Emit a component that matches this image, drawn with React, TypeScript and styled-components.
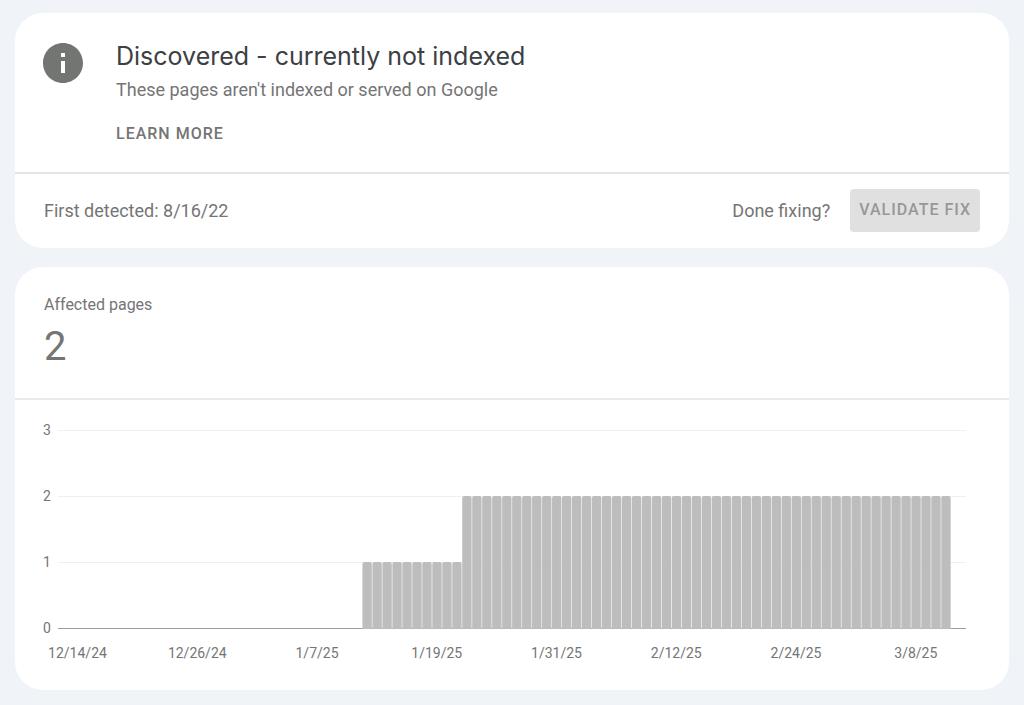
import React from "react";
import styled, { createGlobalStyle } from "styled-components";

const GlobalStyle = createGlobalStyle`
  * { box-sizing: border-box; }
  body {
    margin: 0;
    background: #f0f4f9;
    color: #757575;
    font-family: Roboto, "Liberation Sans", sans-serif;
  }
`;

const Page = styled.main`
  display: flex;
  flex-direction: column;
  gap: 19px;
  padding: 13px 15px 15px;
`;

const Card = styled.section`
  overflow: hidden;
  border-radius: 28px;
  background: #fff;
`;

const IssueHeader = styled.header`
  display: flex;
  align-items: flex-start;
  gap: 33px;
  padding: 25px 28px 26px;
  border-bottom: 2px solid #e4e4e4;
`;

const InfoIcon = styled.svg`
  flex: none;
  width: 40px;
  height: 40px;
  margin-top: 5px;
  fill: #737573;
`;

const IssueText = styled.div`
  display: flex;
  flex-direction: column;
  align-items: flex-start;
`;

const Title = styled.h1`
  margin: 0;
  color: #3c4043;
  font: 400 25px/36px Inter, "Open Sans", sans-serif;
`;

const Description = styled.p`
  margin: 4px 0 20px;
  font-size: 18px;
  line-height: 24px;
`;

const LearnMore = styled.a`
  color: #757575;
  font-size: 16px;
  font-weight: 500;
  line-height: 24px;
  letter-spacing: 1px;
  text-decoration: none;
  text-transform: uppercase;
`;

const IssueFooter = styled.div`
  display: flex;
  align-items: center;
  justify-content: space-between;
  padding: 15px 29px 16px;
  font-size: 18px;
  line-height: 24px;
`;

const FixActions = styled.div`
  display: flex;
  align-items: center;
  gap: 20px;
`;

const ValidateButton = styled.button`
  height: 43px;
  padding: 0 9px 2px;
  border: 0;
  border-radius: 4px;
  background: #e0e0e0;
  color: #979797;
  font: 500 16px/24px Roboto, "Liberation Sans", sans-serif;
  letter-spacing: 1px;
  text-transform: uppercase;
`;

const Summary = styled.div`
  padding: 26px 29px 27px;
  border-bottom: 2px solid #e9e9e9;
`;

const SummaryLabel = styled.h2`
  margin: 0;
  font-size: 16px;
  font-weight: 400;
  line-height: 24px;
`;

const SummaryValue = styled.p`
  margin: 6px 0 0;
  font-size: 40px;
  line-height: 48px;
`;

const Chart = styled.svg`
  display: block;
  width: 100%;
  height: auto;
  font-family: Roboto, "Liberation Sans", sans-serif;
  font-size: 14px;
  fill: #757575;
`;

const GridLine = styled.rect<{ $axis?: boolean }>`
  fill: ${(p) => (p.$axis ? "#9e9e9e" : "#eceff3")};
`;

const Bar = styled.path`
  fill: #bdbdbd;
`;

const DATES = ["12/14/24", "12/26/24", "1/7/25", "1/19/25", "1/31/25", "2/12/25", "2/24/25", "3/8/25"];

// One value per day from 12/14/24.
const VALUES = [...Array(29).fill(0), ...Array(10).fill(1), ...Array(49).fill(2)];

const BASE_Y = 228;
const UNIT = 66;
const DAY = 9.98;
const FIRST_X = 58;
const BAR_W = 9.4;

const barPath = (day: number, value: number) => {
  const x = FIRST_X + day * DAY;
  const top = BASE_Y - value * UNIT;
  return `M${x} ${BASE_Y + 1}V${top + 2}q0 -2 2 -2h${BAR_W - 4}q2 0 2 2V${BASE_Y + 1}z`;
};

export default function App() {
  return (
    <>
      <GlobalStyle />
      <Page>
        <Card>
          <IssueHeader>
            <InfoIcon viewBox="2 2 20 20" aria-hidden="true">
              <path d="M12 2C6.48 2 2 6.48 2 12s4.48 10 10 10 10-4.48 10-10S17.52 2 12 2zm1 15h-2v-6h2v6zm0-8h-2V7h2v2z" />
            </InfoIcon>
            <IssueText>
              <Title>Discovered - currently not indexed</Title>
              <Description>These pages aren't indexed or served on Google</Description>
              <LearnMore href="#learn-more">Learn more</LearnMore>
            </IssueText>
          </IssueHeader>
          <IssueFooter>
            <span>First detected: 8/16/22</span>
            <FixActions>
              <span>Done fixing?</span>
              <ValidateButton type="button" disabled>Validate fix</ValidateButton>
            </FixActions>
          </IssueFooter>
        </Card>
        <Card>
          <Summary>
            <SummaryLabel>Affected pages</SummaryLabel>
            <SummaryValue>2</SummaryValue>
          </Summary>
          <Chart viewBox="0 0 994 290" role="img" aria-label="Affected pages by day">
            {[3, 2, 1, 0].map((n) => (
              <g key={n}>
                <text x="32" y={BASE_Y - n * UNIT + 5} textAnchor="middle">{n}</text>
                <GridLine x="43" y={BASE_Y - n * UNIT} width="908" height="1" $axis={n === 0} />
              </g>
            ))}
            {VALUES.map((value, day) => value > 0 && <Bar key={day} d={barPath(day, value)} />)}
            {DATES.map((date, i) => (
              <text key={date} x={62.5 + i * 12 * DAY} y="258" textAnchor="middle">{date}</text>
            ))}
          </Chart>
        </Card>
      </Page>
    </>
  );
}
